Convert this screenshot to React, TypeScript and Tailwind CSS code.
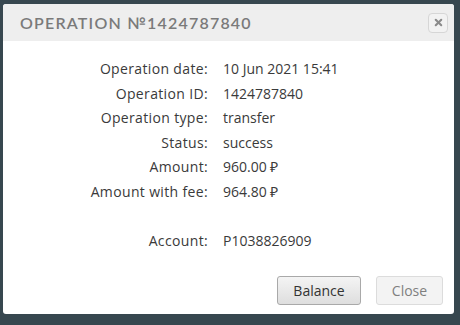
import { X } from "lucide-react";

const rows: [string, string][] = [
  ["Operation date:", "10 Jun 2021 15:41"],
  ["Operation ID:", "1424787840"],
  ["Operation type:", "transfer"],
  ["Status:", "success"],
  ["Amount:", "960.00 ₽"],
  ["Amount with fee:", "964.80 ₽"],
  ["", ""],
  ["Account:", "P1038826909"],
];

export default function App() {
  return (
    <div className="h-[325px] w-[460px] bg-[#37474f] pl-[3px] pt-[4px]">
      <div className="flex h-[310px] w-[451px] flex-col overflow-hidden rounded-[3px] bg-white">
        <div className="flex h-[37px] items-center justify-between bg-[#eeeeee] pl-[17px] pr-[6px]">
          <h2 className="font-['Lato',sans-serif] text-[16px] font-semibold tracking-[1.2px] text-[#7a7a7a]">
            OPERATION №1424787840
          </h2>
          <button className="flex h-[20px] w-[20px] items-center justify-center rounded-[4px] border border-[#d6d6d6] bg-[#f2f2f2]">
            <X size={11} strokeWidth={4.5} className="text-[#8a8a8a]" />
          </button>
        </div>

        <div className="grid grid-cols-[205px_1fr] gap-x-[15px] pt-[16px] font-['Open_Sans',sans-serif] text-[14px] leading-[24.6px] text-[#3a3a3a]">
          {rows.map(([label, value], i) => (
            <div key={i} className="contents">
              <span className="h-[24.6px] text-right tracking-[0.35px]">{label}</span>
              <span className="h-[24.6px]">{value}</span>
            </div>
          ))}
        </div>

        <div className="mt-auto flex justify-end gap-[15px] pb-[9px] pr-[11px] font-['Open_Sans',sans-serif] text-[14px]">
          <button className="h-[29px] w-[84px] rounded-[3px] border border-[#a9a9a9] bg-gradient-to-b from-[#f4f4f4] to-[#dedede] text-[#333]">
            Balance
          </button>
          <button className="h-[29px] w-[67px] rounded-[3px] border border-[#dcdcdc] bg-[#f3f3f3] text-[#7f7f7f]">
            Close
          </button>
        </div>
      </div>
    </div>
  );
}
